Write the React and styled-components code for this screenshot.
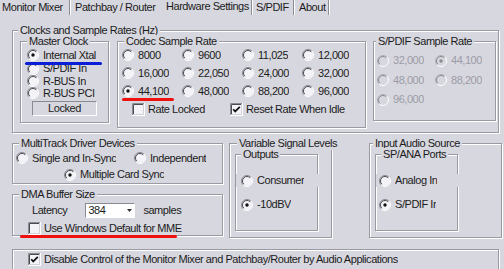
import styled, { createGlobalStyle } from "styled-components";

const BG = "#d7d7df";

const Global = createGlobalStyle`
  html, body { margin: 0; padding: 0; background: ${BG}; }
  body { font-family: "Liberation Sans", Arial, sans-serif; }
`;

const Window = styled.div`
  position: relative;
  width: 504px;
  height: 269px;
  overflow: hidden;
  background: ${BG};
  color: #1c1c1c;
  font-size: 11px;
  line-height: 13px;
  letter-spacing: -0.45px;
`;

const TabBar = styled.div`
  display: flex;
  height: 17px;
`;

const Tab = styled.div`
  box-sizing: border-box;
  width: ${(p) => p.$w}px;
  padding-left: ${(p) => p.$pl}px;
  padding-top: ${(p) => (p.$active ? 0 : 1)}px;
  white-space: nowrap;
`;

const TabSep = styled.div`
  width: 0;
  margin: 0 0 2px;
  border-left: 1px solid #8c8c94;
  border-right: 1px solid #fff;
`;

const Content = styled.div`
  display: flex;
  flex-direction: column;
  padding: 13px 0 0 12px;
`;

const Group = styled.div`
  box-sizing: border-box;
  display: flex;
  flex-direction: column;
  flex: none;
  width: ${(p) => p.$w}px;
  height: ${(p) => p.$h}px;
  margin-top: ${(p) => p.$mt || 0}px;
  margin-left: ${(p) => p.$ml || 0}px;
  border: 1px solid #9a9aa2;
  box-shadow: inset 1px 1px #fff, 1px 1px #fff;
`;

const Legend = styled.span`
  align-self: flex-start;
  height: 13px;
  margin: -7px 0 0 ${(p) => p.$ml ?? 5}px;
  padding: 0 2px;
  background: ${BG};
  white-space: nowrap;
`;

const Row = styled.div`
  display: flex;
  align-items: center;
  height: ${(p) => p.$h || 13}px;
  margin-top: ${(p) => p.$mt || 0}px;
  padding-left: ${(p) => p.$pl || 0}px;
`;

const GapRow = styled(Row)`
  margin-right: -3px;
  background: ${BG};
`;

const FlexRow = styled.div`
  display: flex;
  align-items: flex-start;
  margin-top: ${(p) => p.$mt || 0}px;
  margin-left: ${(p) => p.$ml || 0}px;
`;

const Column = styled.div`
  display: flex;
  flex-direction: column;
`;

const RateGrid = styled.div`
  display: grid;
  grid-template-columns: repeat(${(p) => p.$cols}, ${(p) => p.$cw}px);
  grid-auto-rows: ${(p) => p.$rh}px;
  align-items: center;
  margin-top: ${(p) => p.$mt || 0}px;
  padding-left: ${(p) => p.$pl || 0}px;
`;

const Item = styled.div`
  display: flex;
  align-items: center;
  width: ${(p) => (p.$w ? `${p.$w}px` : "auto")};
  margin-left: ${(p) => p.$ml || 0}px;
  color: ${(p) => (p.$disabled ? "#9c9ca6" : "inherit")};
  white-space: nowrap;
`;

const Label = styled.span`
  margin-left: ${(p) => p.$gap ?? 4}px;
  max-width: ${(p) => (p.$clip ? `${p.$clip}px` : "none")};
  overflow: hidden;
`;

const Sunken = styled.div`
  box-sizing: border-box;
  display: flex;
  align-items: center;
  width: ${(p) => p.$w}px;
  height: 15px;
  margin-left: ${(p) => p.$ml || 0}px;
  background: ${(p) => (p.$white ? "#fff" : BG)};
  border-top: 1px solid #8a8a92;
  border-left: 1px solid #8a8a92;
  border-bottom: 1px solid #fff;
  border-right: 1px solid #fff;
`;

const LockedBox = styled(Sunken)`
  justify-content: center;
  margin-top: ${(p) => p.$mt || 0}px;
`;

const Combo = styled(Sunken)`
  justify-content: space-between;
  padding: 0 2px 0 2px;
`;

const Text = styled.span`
  margin-left: ${(p) => p.$ml || 0}px;
  white-space: nowrap;
`;

const Mark = styled.div`
  position: absolute;
  left: ${(p) => p.$x}px;
  top: ${(p) => p.$y}px;
  width: ${(p) => p.$w}px;
  height: 3px;
  border-radius: 2px;
  background: ${(p) => p.$color};
`;

const Radio = ({ checked, disabled }) => (
  <svg width="12" height="12" viewBox="0 0 12 12" style={{ flex: "none" }}>
    <circle cx="6" cy="6" r="5" fill={disabled ? BG : "#f4f4f8"} />
    <path d="M9.9 2.1 A5.5 5.5 0 0 0 2.1 9.9" stroke={disabled ? "#b0b0b8" : "#8a8a92"} fill="none" />
    <path d="M9.2 2.8 A4.5 4.5 0 0 0 2.8 9.2" stroke={disabled ? "#8a8a92" : "#4a4a52"} fill="none" />
    <path d="M2.1 9.9 A5.5 5.5 0 0 0 9.9 2.1" stroke="#fff" fill="none" />
    {checked && <circle cx="6" cy="6" r="1.7" fill={disabled ? "#8a8a92" : "#111"} />}
  </svg>
);

const Check = ({ checked }) => (
  <svg width="13" height="13" viewBox="0 0 13 13" style={{ flex: "none" }}>
    <rect x="0" y="0" width="13" height="13" fill="#f4f4f8" />
    <path d="M0.5 12 V0.5 H12" stroke="#8a8a92" fill="none" />
    <path d="M1.5 11 V1.5 H11" stroke="#4a4a52" fill="none" />
    <path d="M0 12.5 H12.5 V0" stroke="#fff" fill="none" />
    <path d="M1 11.5 H11.5 V1" stroke="#cfcfd7" fill="none" />
    {checked && <path d="M3.2 6.2 L5.2 8.4 L9.8 3.8" stroke="#111" strokeWidth="1.7" fill="none" />}
  </svg>
);

const RadioItem = ({ label, checked, disabled, w, ml, clip }) => (
  <Item $w={w} $ml={ml} $disabled={disabled}>
    <Radio checked={checked} disabled={disabled} />
    <Label $clip={clip}>{label}</Label>
  </Item>
);

const CheckItem = ({ label, checked, w, ml }) => (
  <Item $w={w} $ml={ml}>
    <Check checked={checked} />
    <Label $gap={3}>{label}</Label>
  </Item>
);

const codecRates = ["8000", "9600", "11,025", "12,000", "16,000", "22,050", "24,000", "32,000", "44,100", "48,000", "88,200", "96,000"];
const spdifRates = ["32,000", "44,100", "48,000", "88,200", "96,000"];

export default function App() {
  return (
    <Window>
      <Global />
      <TabBar>
        <Tab $w={69} $pl={2}>Monitor Mixer</Tab>
        <TabSep />
        <Tab $w={92} $pl={4}>Patchbay / Router</Tab>
        <Tab $w={88} $pl={3} $active>Hardware Settings</Tab>
        <TabSep />
        <Tab $w={40} $pl={3}>S/PDIF</Tab>
        <TabSep />
        <Tab $w={33} $pl={4}>About</Tab>
        <TabSep />
      </TabBar>

      <Content>
        <Group $w={487} $h={103}>
          <Legend>Clocks and Sample Rates (Hz)</Legend>
          <FlexRow $mt={4} $ml={7}>
            <Group $w={89} $h={82}>
              <Legend $ml={6}>Master Clock</Legend>
              <Row $h={14} $pl={6}><RadioItem label="Internal Xtal" checked /></Row>
              <Row $h={13} $pl={6}><RadioItem label="S/PDIF In" /></Row>
              <Row $h={12} $pl={6}><RadioItem label="R-BUS In" /></Row>
              <Row $h={12} $pl={6}><RadioItem label="R-BUS PCI" /></Row>
              <LockedBox $w={65} $ml={11} $mt={2}>Locked</LockedBox>
            </Group>

            <Group $w={249} $h={87} $ml={8}>
              <Legend $ml={6}>Codec Sample Rate</Legend>
              <RateGrid $cols={4} $cw={60} $rh={18} $mt={-2} $pl={4}>
                {codecRates.map((r) => (
                  <RadioItem key={r} label={r} checked={r === "44,100"} />
                ))}
              </RateGrid>
              <Row $h={18} $pl={14}>
                <CheckItem label="Rate Locked" w={98} />
                <CheckItem label="Reset Rate When Idle" checked />
              </Row>
            </Group>

            <Group $w={123} $h={80} $ml={7}>
              <Legend $ml={2}>S/PDIF Sample Rate</Legend>
              <RateGrid $cols={2} $cw={58} $rh={19.5} $mt={3} $pl={3}>
                {spdifRates.map((r) => (
                  <RadioItem key={r} label={r} checked={r === "44,100"} disabled />
                ))}
              </RateGrid>
            </Group>
          </FlexRow>
        </Group>

        <FlexRow $mt={10}>
          <Column>
            <Group $w={211} $h={41}>
              <Legend $ml={6}>MultiTrack Driver Devices</Legend>
              <Row $h={18} $pl={3}>
                <RadioItem label="Single and In-Sync" w={118} />
                <RadioItem label="Independent" />
              </Row>
              <Row $h={17} $pl={51}>
                <RadioItem label="Multiple Card Sync" checked />
              </Row>
            </Group>
            <Group $w={211} $h={42} $mt={10}>
              <Legend $ml={6}>DMA Buffer Size</Legend>
              <Row $h={15} $mt={2} $pl={19}>
                <Text>Latency</Text>
                <Combo $w={50} $ml={18} $white>
                  <span>384</span>
                  <svg width="5" height="3" viewBox="0 0 5 3"><path d="M0 0 H5 L2.5 3 Z" fill="#333" /></svg>
                </Combo>
                <Text $ml={8}>samples</Text>
              </Row>
              <Row $h={13} $mt={4} $pl={15}>
                <CheckItem label="Use Windows Default for MME" />
              </Row>
            </Group>
          </Column>

          <Group $w={103} $h={95} $ml={6}>
            <Legend $ml={7}>Variable Signal Levels</Legend>
            <Group $w={83} $h={77} $mt={4} $ml={5}>
              <Legend $ml={5}>Outputs</Legend>
              <GapRow $h={13} $mt={13} $pl={5}><RadioItem label="Consumer" /></GapRow>
              <Row $h={13} $mt={11} $pl={5}><RadioItem label="-10dBV" checked /></Row>
            </Group>
          </Group>

          <Group $w={133} $h={95} $ml={37}>
            <Legend $ml={3}>Input Audio Source</Legend>
            <Group $w={83} $h={77} $mt={4} $ml={5}>
              <Legend $ml={5}>SP/ANA Ports</Legend>
              <GapRow $h={13} $mt={13} $pl={3}><RadioItem label="Analog In" /></GapRow>
              <Row $h={13} $mt={11} $pl={3}><RadioItem label="S/PDIF In" checked clip={41} /></Row>
            </Group>
          </Group>
        </FlexRow>

        <Group $w={487} $h={22} $mt={11}>
          <Row $h={18} $pl={15}>
            <CheckItem label="Disable Control of the Monitor Mixer and Patchbay/Router by Audio Applications" checked />
          </Row>
        </Group>
      </Content>

      <Mark $x={25} $y={62} $w={77} $color="#0a1ed8" />
      <Mark $x={122} $y={98} $w={52} $color="#f01010" />
      <Mark $x={20} $y={235} $w={157} $color="#f01010" />
    </Window>
  );
}
